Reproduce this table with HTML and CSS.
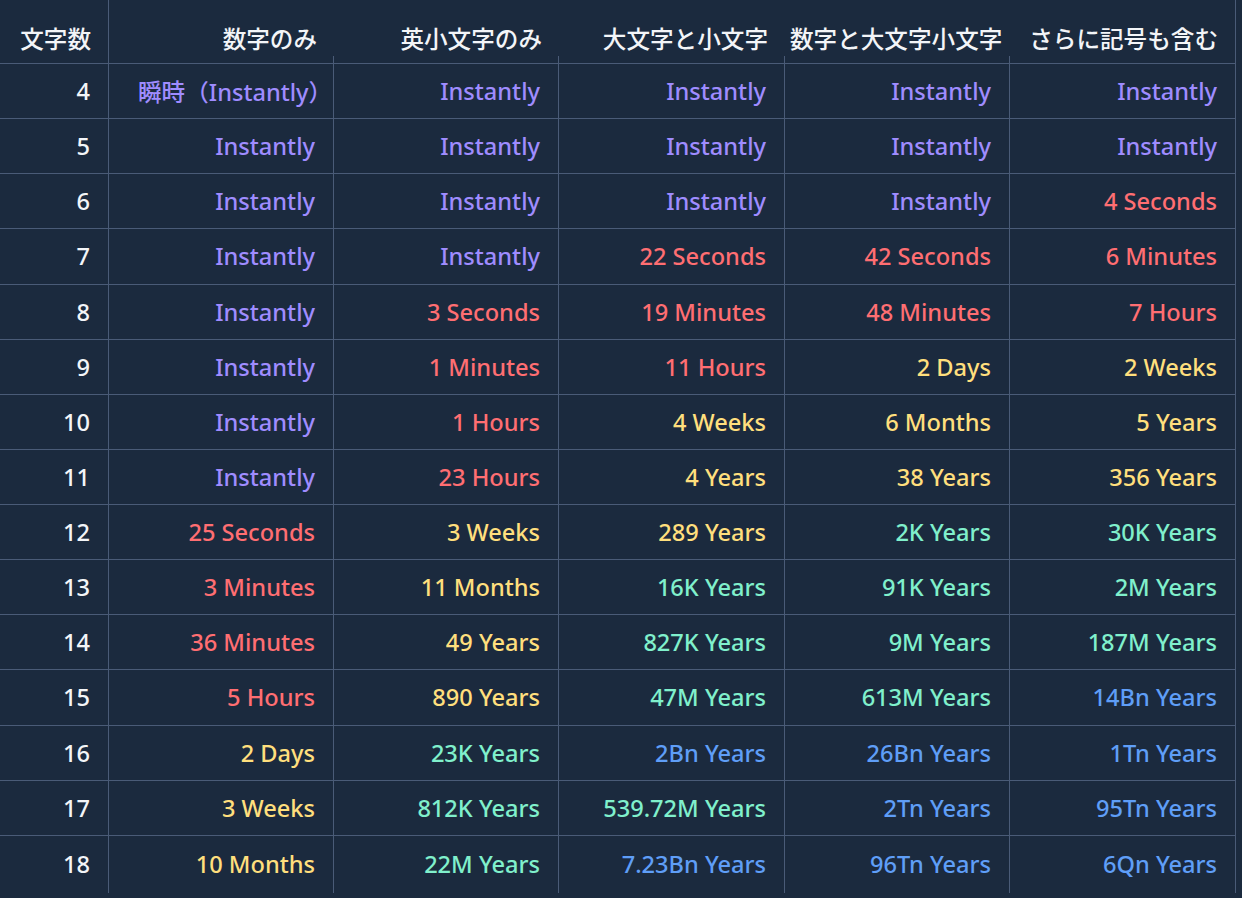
FILE: index.html
```html
<!DOCTYPE html>
<html lang="ja">
<head>
<meta charset="utf-8">
<title>パスワード解読時間</title>
<link rel="stylesheet" href="styles.css">
</head>
<body>
<div class="table">
  <div class="th th-first">文字数</div>
  <div class="th th-mid">数字のみ</div>
  <div class="th th-mid">英小文字のみ</div>
  <div class="th th-mid">大文字と小文字</div>
  <div class="th th-mid">数字と大文字小文字</div>
  <div class="th th-last">さらに記号も含む</div>

  <div class="td num">4</div>
  <div class="td c-inst">瞬時（Instantly）</div>
  <div class="td c-inst">Instantly</div>
  <div class="td c-inst">Instantly</div>
  <div class="td c-inst">Instantly</div>
  <div class="td c-inst">Instantly</div>

  <div class="td num">5</div>
  <div class="td c-inst">Instantly</div>
  <div class="td c-inst">Instantly</div>
  <div class="td c-inst">Instantly</div>
  <div class="td c-inst">Instantly</div>
  <div class="td c-inst">Instantly</div>

  <div class="td num">6</div>
  <div class="td c-inst">Instantly</div>
  <div class="td c-inst">Instantly</div>
  <div class="td c-inst">Instantly</div>
  <div class="td c-inst">Instantly</div>
  <div class="td c-red">4 Seconds</div>

  <div class="td num">7</div>
  <div class="td c-inst">Instantly</div>
  <div class="td c-inst">Instantly</div>
  <div class="td c-red">22 Seconds</div>
  <div class="td c-red">42 Seconds</div>
  <div class="td c-red">6 Minutes</div>

  <div class="td num">8</div>
  <div class="td c-inst">Instantly</div>
  <div class="td c-red">3 Seconds</div>
  <div class="td c-red">19 Minutes</div>
  <div class="td c-red">48 Minutes</div>
  <div class="td c-red">7 Hours</div>

  <div class="td num">9</div>
  <div class="td c-inst">Instantly</div>
  <div class="td c-red">1 Minutes</div>
  <div class="td c-red">11 Hours</div>
  <div class="td c-yel">2 Days</div>
  <div class="td c-yel">2 Weeks</div>

  <div class="td num">10</div>
  <div class="td c-inst">Instantly</div>
  <div class="td c-red">1 Hours</div>
  <div class="td c-yel">4 Weeks</div>
  <div class="td c-yel">6 Months</div>
  <div class="td c-yel">5 Years</div>

  <div class="td num">11</div>
  <div class="td c-inst">Instantly</div>
  <div class="td c-red">23 Hours</div>
  <div class="td c-yel">4 Years</div>
  <div class="td c-yel">38 Years</div>
  <div class="td c-yel">356 Years</div>

  <div class="td num">12</div>
  <div class="td c-red">25 Seconds</div>
  <div class="td c-yel">3 Weeks</div>
  <div class="td c-yel">289 Years</div>
  <div class="td c-teal">2K Years</div>
  <div class="td c-teal">30K Years</div>

  <div class="td num">13</div>
  <div class="td c-red">3 Minutes</div>
  <div class="td c-yel">11 Months</div>
  <div class="td c-teal">16K Years</div>
  <div class="td c-teal">91K Years</div>
  <div class="td c-teal">2M Years</div>

  <div class="td num">14</div>
  <div class="td c-red">36 Minutes</div>
  <div class="td c-yel">49 Years</div>
  <div class="td c-teal">827K Years</div>
  <div class="td c-teal">9M Years</div>
  <div class="td c-teal">187M Years</div>

  <div class="td num">15</div>
  <div class="td c-red">5 Hours</div>
  <div class="td c-yel">890 Years</div>
  <div class="td c-teal">47M Years</div>
  <div class="td c-teal">613M Years</div>
  <div class="td c-blue">14Bn Years</div>

  <div class="td num">16</div>
  <div class="td c-yel">2 Days</div>
  <div class="td c-teal">23K Years</div>
  <div class="td c-blue">2Bn Years</div>
  <div class="td c-blue">26Bn Years</div>
  <div class="td c-blue">1Tn Years</div>

  <div class="td num">17</div>
  <div class="td c-yel">3 Weeks</div>
  <div class="td c-teal">812K Years</div>
  <div class="td c-teal">539.72M Years</div>
  <div class="td c-blue">2Tn Years</div>
  <div class="td c-blue">95Tn Years</div>

  <div class="td num last">18</div>
  <div class="td c-yel last">10 Months</div>
  <div class="td c-teal last">22M Years</div>
  <div class="td c-blue last">7.23Bn Years</div>
  <div class="td c-blue last">96Tn Years</div>
  <div class="td c-blue last">6Qn Years</div>
</div>
</body>
</html>
```

FILE: styles.css
```css
:root {
  --bg: #1b2a3e;
  --line: #4a5b77;
}
html, body {
  margin: 0;
  padding: 0;
  background: var(--bg);
}
body {
  width: 1242px;
  height: 898px;
  overflow: hidden;
  font-family: "Noto Sans", "Noto Sans CJK JP", sans-serif;
  font-weight: 500;
  text-spacing-trim: space-all;
}
.table {
  display: grid;
  grid-template-columns: 109px 225px 225px 226px 225px 226px;
  grid-template-rows: 64px repeat(14, 55.14px) 57px;
  width: 1236px;
}
.th, .td {
  display: grid;
  align-items: center;
  text-align: right;
  white-space: nowrap;
  box-sizing: border-box;
}
.th {
  color: #f3f5f8;
  font-size: 23.6px;
  padding: 12px 17px 0 5px;
  border-bottom: 1px solid var(--line);
}
.th-first, .th-last {
  border-right: 1px solid var(--line);
}
.th-mid {
  background: linear-gradient(var(--line), var(--line)) no-repeat right bottom / 1px 7px;
}
.td {
  font-size: 23.6px;
  padding: 0 18px 0 29px;
  border-right: 1px solid var(--line);
  border-bottom: 1px solid var(--line);
}
.td.last {
  border-bottom: none;
}
.num { color: #f3f5f8; padding-left: 5px; }
.c-inst { color: #9f8cff; }
.c-red { color: #ff6e72; }
.c-yel { color: #ffdf7d; }
.c-teal { color: #80f0cc; }
.c-blue { color: #5f9ef7; }
```
